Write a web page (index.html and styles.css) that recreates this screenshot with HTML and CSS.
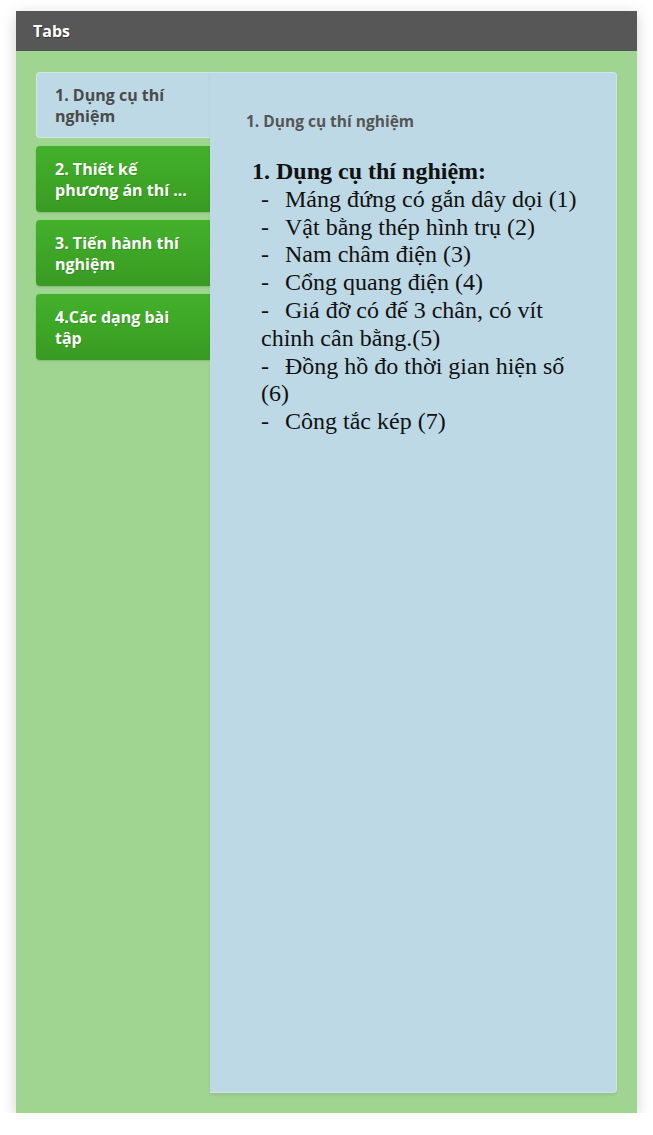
FILE: index.html
```html
<!DOCTYPE html>
<html lang="vi">
<head>
  <meta charset="UTF-8">
  <title>Tabs</title>
  <link rel="stylesheet" href="styles.css">
</head>
<body>
  <div class="frame">
    <div class="frame-header">Tabs</div>
    <div class="frame-body">
      <div class="tabs">
        <ul class="tab-list">
          <li class="tab active">1. Dụng cụ thí nghiệm</li>
          <li class="tab">2. Thiết kế phương án thí ...</li>
          <li class="tab">3. Tiến hành thí nghiệm</li>
          <li class="tab">4.Các dạng bài tập</li>
        </ul>
        <div class="tab-panel">
          <h2 class="panel-title">1. Dụng cụ thí nghiệm</h2>
          <div class="doc">
            <p class="doc-head">1. Dụng cụ thí nghiệm:</p>
            <p class="item"><span class="dash">-</span>Máng đứng có gắn dây dọi (1)</p>
            <p class="item"><span class="dash">-</span>Vật bằng thép hình trụ (2)</p>
            <p class="item"><span class="dash">-</span>Nam châm điện (3)</p>
            <p class="item"><span class="dash">-</span>Cổng quang điện (4)</p>
            <p class="item"><span class="dash">-</span>Giá đỡ có đế 3 chân, có vít chỉnh cân bằng.(5)</p>
            <p class="item"><span class="dash">-</span>Đồng hồ đo thời gian hiện số (6)</p>
            <p class="item"><span class="dash">-</span>Công tắc kép (7)</p>
          </div>
        </div>
      </div>
    </div>
  </div>
</body>
</html>
```

FILE: styles.css
```css
body {
  margin: 0;
  background: #fff;
  font-family: 'Open Sans', sans-serif;
}
.frame {
  margin: 11px 16px 0;
  width: 621px;
  height: 1102px;
  display: flex;
  flex-direction: column;
  box-shadow: 0 4px 14px rgba(0,0,0,0.18);
}
.frame-header {
  height: 40px;
  background: #575757;
  color: #fff;
  font-weight: bold;
  font-size: 16px;
  line-height: 40px;
  padding-left: 17px;
  text-shadow: 1px 1px 1px rgba(0,0,0,0.4);
}
.frame-body {
  flex: 1;
  background: #9fd591;
  padding: 21px 20px 20px;
  display: flex;
}
.tabs {
  flex: 1;
  display: flex;
}
.tab-list {
  list-style: none;
  margin: 0;
  padding: 0;
  width: 174px;
  display: flex;
  flex-direction: column;
  gap: 8px;
}
.tab {
  height: 66px;
  box-sizing: border-box;
  padding: 13px 14px 0 19px;
  font-size: 16px;
  font-weight: bold;
  line-height: 21px;
  color: #fff;
  background: linear-gradient(#43b12b, #389b22);
  border-radius: 4px 0 0 4px;
  box-shadow: 0 1px 2px rgba(0,0,0,0.15);
  text-shadow: 1px 1px 0 rgba(0,0,0,0.15);
}
.tab.active {
  background: #bdd9e5;
  color: #4a4a4a;
  text-shadow: none;
  border: 1px solid #d7e6dd;
  border-right: none;
  padding: 12px 14px 0 18px;
  box-shadow: none;
}
.tab-panel {
  flex: 1;
  background: #bdd9e5;
  border: 1px solid #d3e2e6;
  border-left: none;
  border-radius: 0 4px 4px 0;
  padding: 38px 34px 0 36px;
  box-shadow: 0 2px 3px rgba(0,0,0,0.08);
}
.panel-title {
  margin: 0 0 27px;
  font-size: 15.5px;
  font-weight: bold;
  color: #555;
  line-height: 20px;
}
.doc {
  font-family: 'Liberation Serif', serif;
  font-size: 24px;
  line-height: 27.8px;
  color: #111;
  padding-left: 6px;
}
.doc p {
  margin: 0;
}
.doc-head {
  font-weight: bold;
}
.item {
  padding-left: 9px;
}
.dash {
  display: inline-block;
  width: 24px;
}
```
